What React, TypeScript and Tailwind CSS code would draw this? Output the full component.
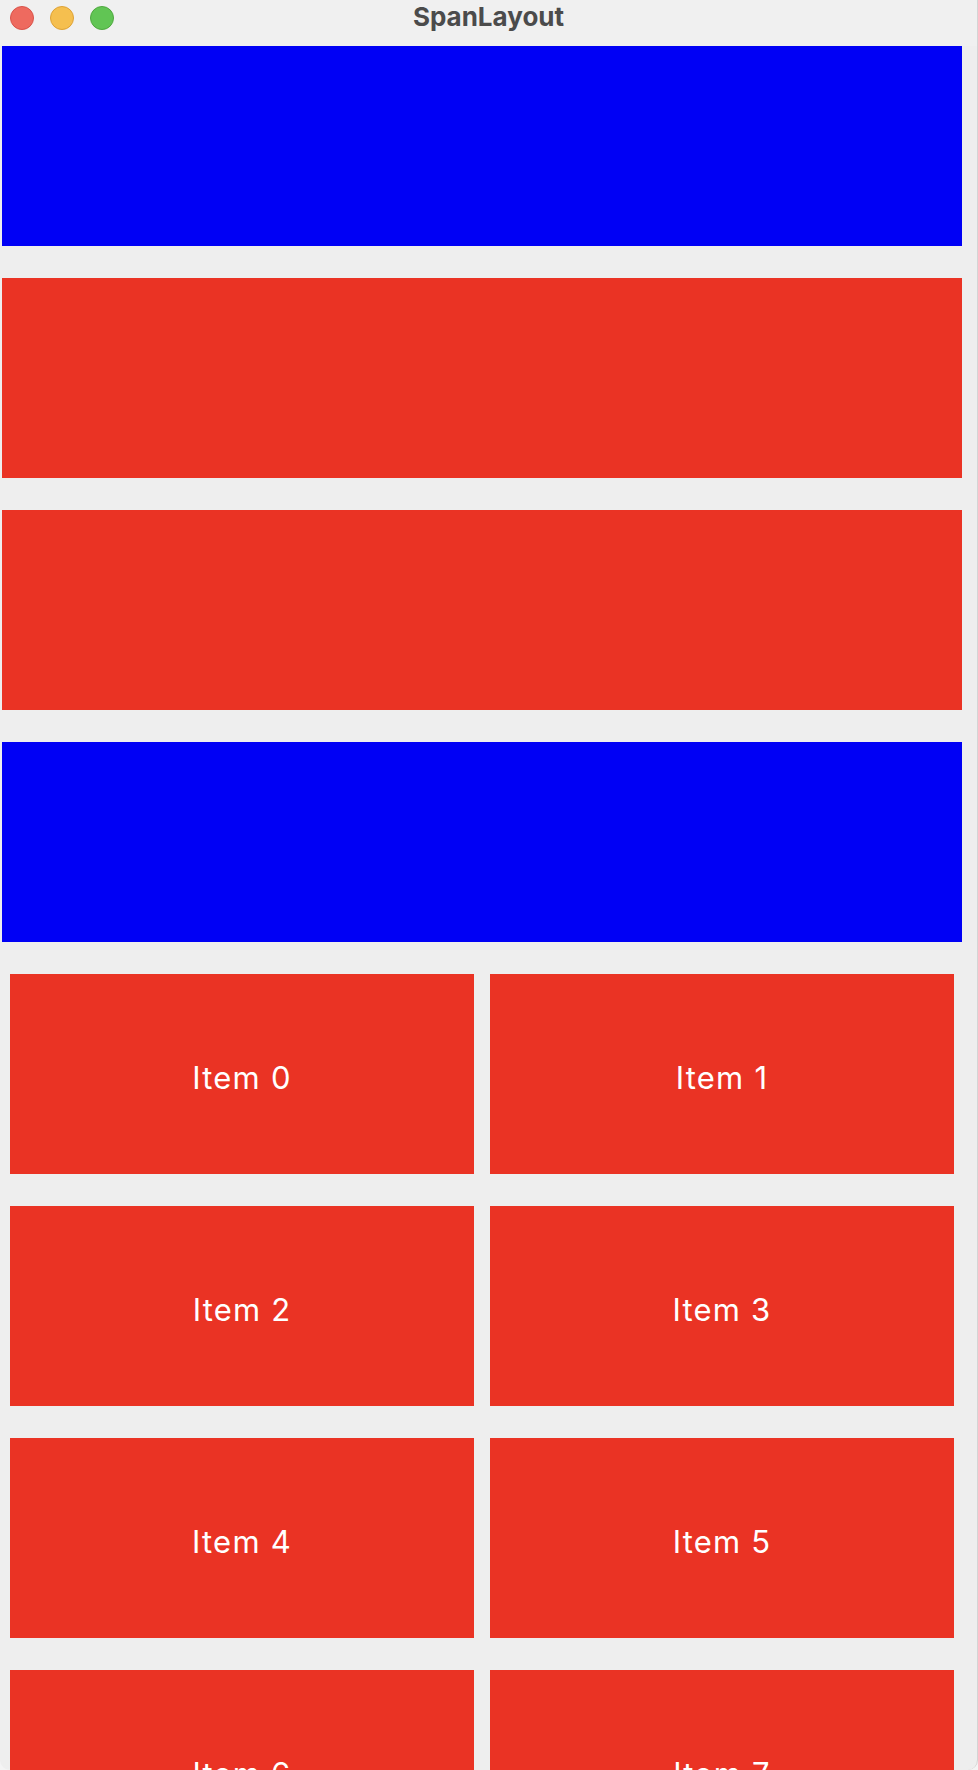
const rows = ["blue", "red", "red", "blue"];
const items = Array.from({ length: 8 }, (_, i) => `Item ${i}`);

function TrafficLights() {
  return (
    <div className="absolute left-[10px] top-[6px] flex gap-4">
      <span className="h-6 w-6 rounded-full border border-[#d9534a] bg-[#ee6a5f]" />
      <span className="h-6 w-6 rounded-full border border-[#dea236] bg-[#f5bf4f]" />
      <span className="h-6 w-6 rounded-full border border-[#4fa83f] bg-[#61c554]" />
    </div>
  );
}

export default function App() {
  return (
    <div className="h-[1770px] w-[978px] overflow-hidden bg-[#f4f4f4]">
      <div className="relative h-[1770px] w-[978px] overflow-hidden rounded-b-[10px] border-r border-[#d4d4d4] bg-[#eeeeee]">
        {/* title bar */}
        <div className="relative flex h-[46px] justify-center bg-[#f0f0f0] pt-[1px]">
          <TrafficLights />
          <span className="font-['Inter','Liberation_Sans',sans-serif] text-[26px] leading-[32px] font-bold text-[#4b4b4b]">
            SpanLayout
          </span>
        </div>

        <div className="flex w-[962px] flex-col gap-8 pl-[2px]">
          {rows.map((c, i) => (
            <div
              key={i}
              className={c === "blue" ? "h-[200px] w-[960px] bg-[#0000f5]" : "h-[200px] w-[960px] bg-[#ea3324]"}
            />
          ))}

          <div className="ml-[8px] grid w-[944px] grid-cols-2 gap-x-4 gap-y-8">
            {items.map((label) => (
              <div
                key={label}
                className="flex h-[200px] items-center justify-center bg-[#ea3324] pt-[8px] font-['Inter','Liberation_Sans',sans-serif] text-[31px] tracking-[1.2px] text-white"
              >
                {label}
              </div>
            ))}
          </div>
        </div>
      </div>
    </div>
  );
}
